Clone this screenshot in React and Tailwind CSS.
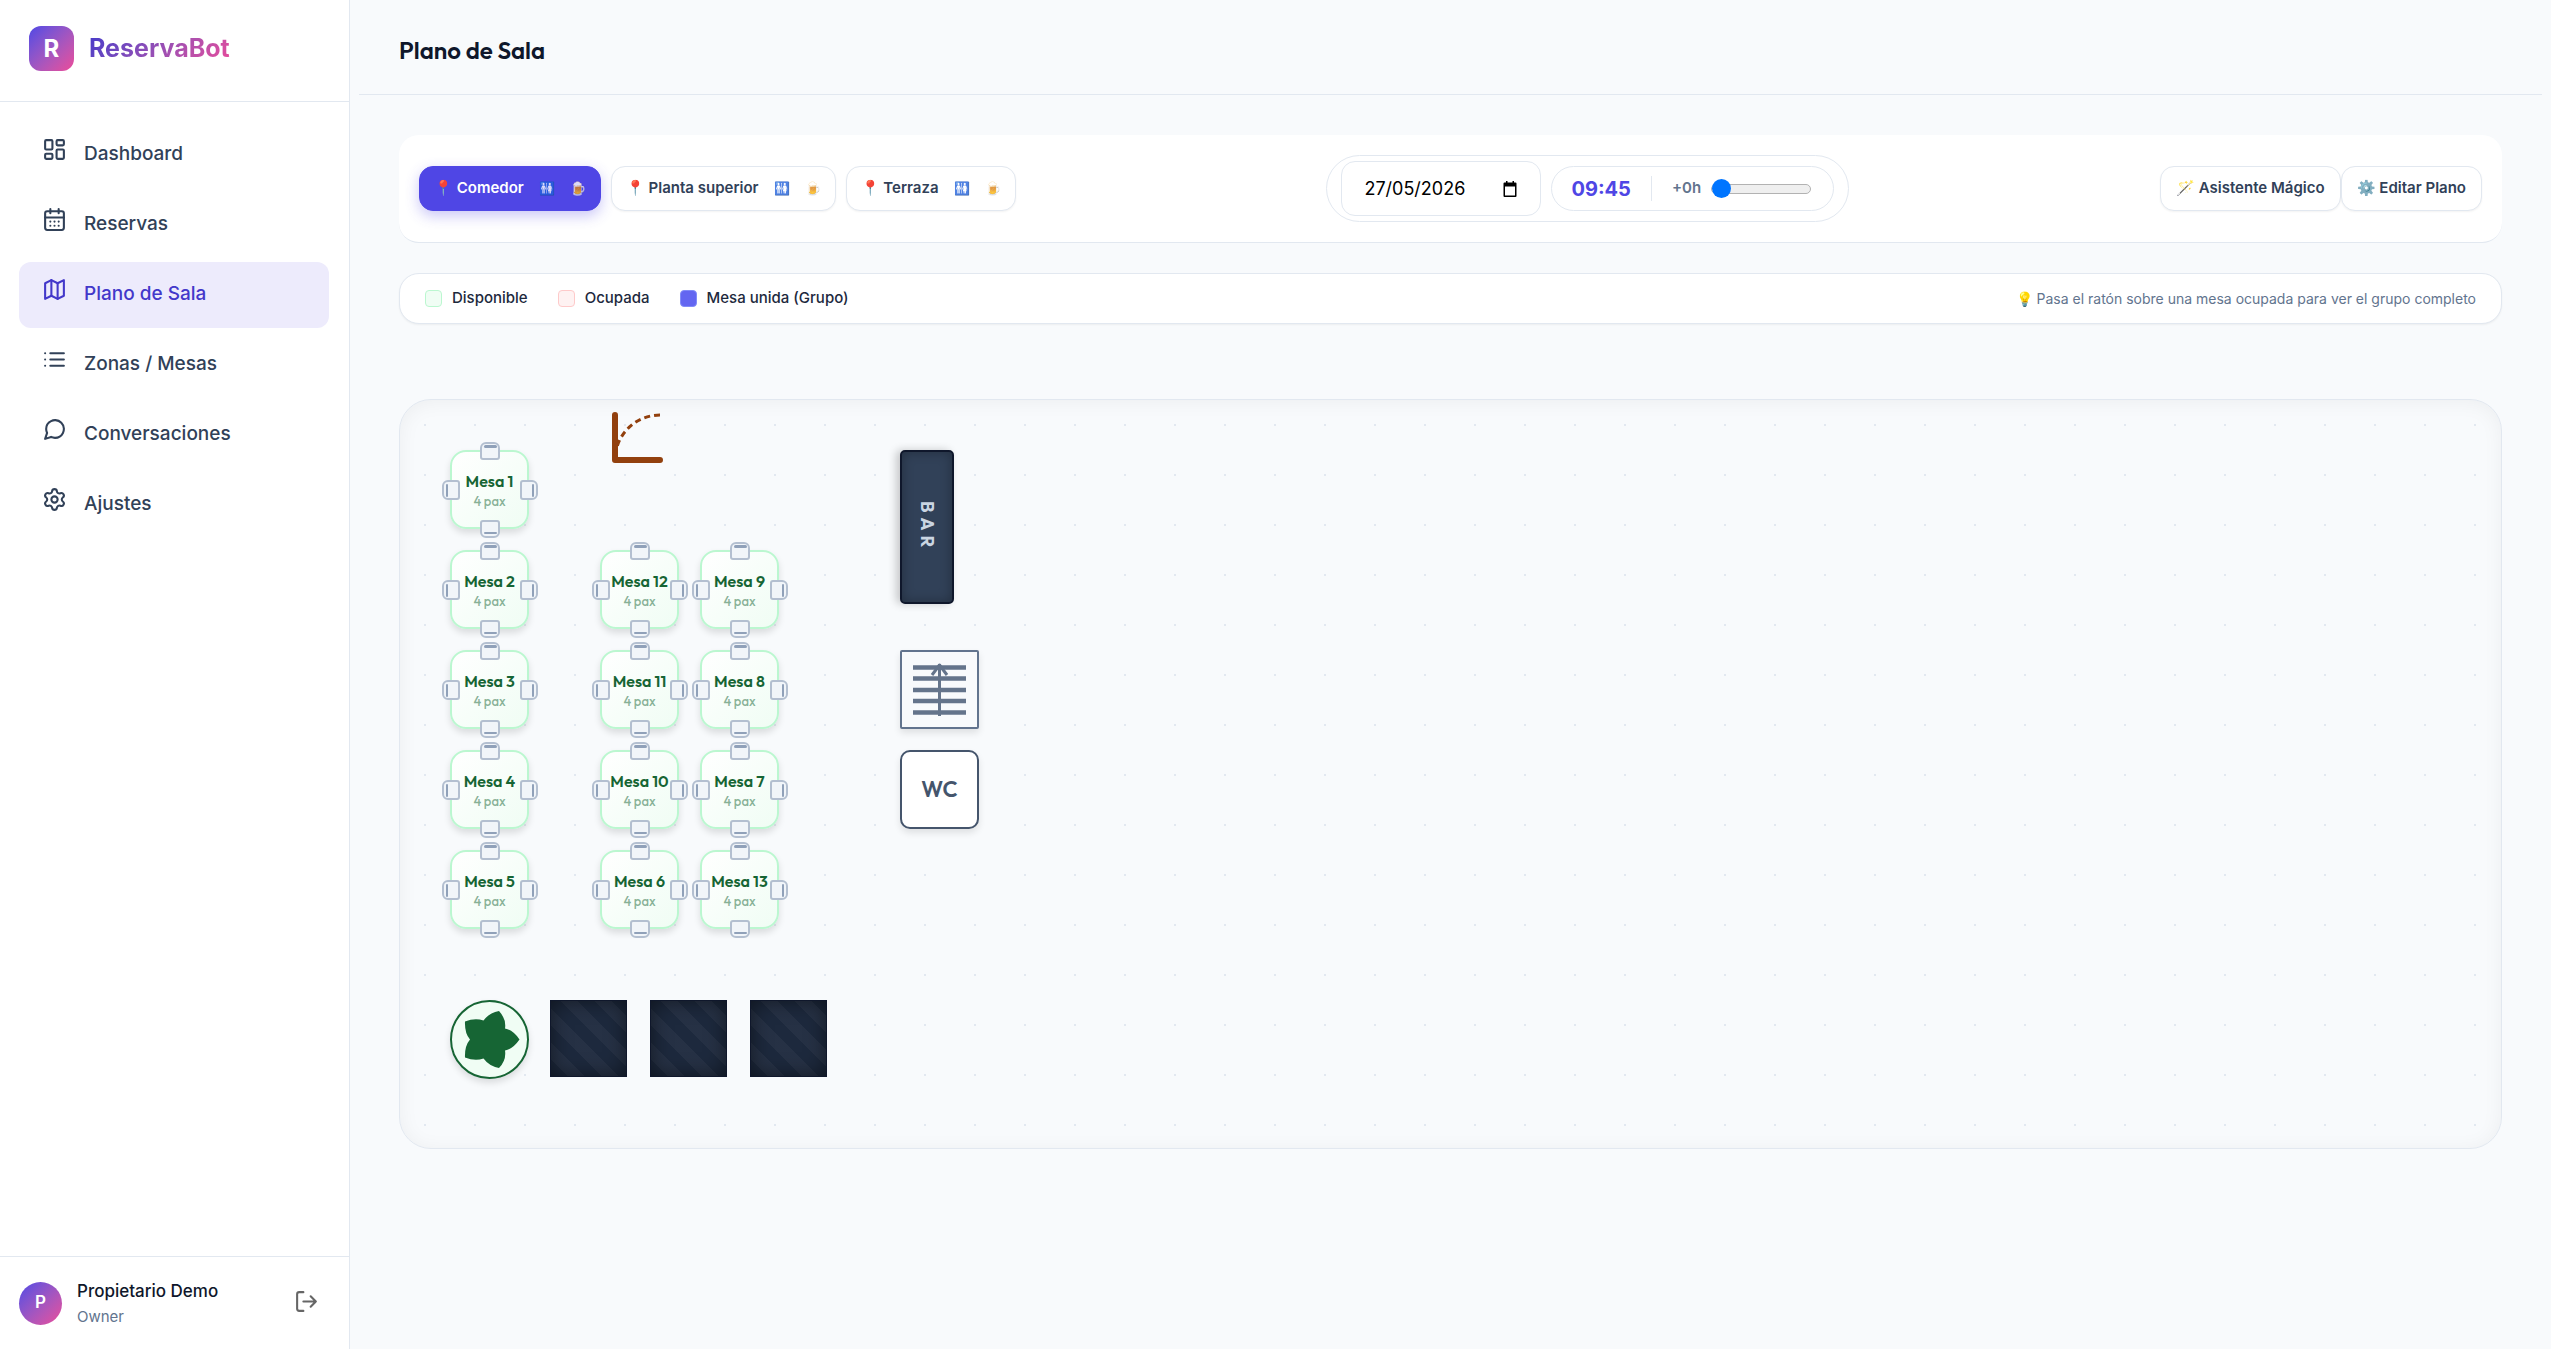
import { useState } from 'react';
import { CalendarDays, LayoutDashboard, Settings } from 'lucide-react';

function MapIcon() {
  return (
    <svg width="25" height="25" viewBox="0 0 24 24" fill="none" stroke="currentColor" strokeWidth="2" strokeLinecap="round" strokeLinejoin="round">
      <polygon points="3 6 9 3 15 6 21 3 21 18 15 21 9 18 3 21" />
      <path d="M9 3v15M15 6v15" />
    </svg>
  );
}

function ListIcon() {
  return (
    <svg width="25" height="25" viewBox="0 0 24 24" fill="none" stroke="currentColor" strokeWidth="2" strokeLinecap="round" strokeLinejoin="round">
      <path d="M8 6h13M8 12h13M8 18h13M3 6h.01M3 12h.01M3 18h.01" />
    </svg>
  );
}

function ChatIcon() {
  return (
    <svg width="25" height="25" viewBox="0 0 24 24" fill="none" stroke="currentColor" strokeWidth="2" strokeLinecap="round" strokeLinejoin="round">
      <path d="M21 11.5a8.38 8.38 0 0 1-.9 3.8 8.5 8.5 0 0 1-7.6 4.7 8.38 8.38 0 0 1-3.8-.9L3 21l1.9-5.7a8.38 8.38 0 0 1-.9-3.8 8.5 8.5 0 0 1 4.7-7.6 8.38 8.38 0 0 1 3.8-.9h.5a8.48 8.48 0 0 1 8 8v.5z" />
    </svg>
  );
}

const navItems = [
  { label: 'Dashboard', icon: <LayoutDashboard size={25} /> },
  { label: 'Reservas', icon: <CalendarDays size={25} /> },
  { label: 'Plano de Sala', icon: <MapIcon />, active: true },
  { label: 'Zonas / Mesas', icon: <ListIcon /> },
  { label: 'Conversaciones', icon: <ChatIcon /> },
  { label: 'Ajustes', icon: <Settings size={25} /> },
];

const zones = ['Comedor', 'Planta superior', 'Terraza'];

const legend = [
  { label: 'Disponible', swatch: 'bg-green-50 border-[#bbf7d0]' },
  { label: 'Ocupada', swatch: 'bg-red-50 border-[#fecaca]' },
  { label: 'Mesa unida (Grupo)', swatch: 'bg-[#6366f1] border-[#818cf8]' },
];

const tables = [
  { name: 'Mesa 1', x: 50, y: 50 },
  { name: 'Mesa 2', x: 50, y: 150 },
  { name: 'Mesa 3', x: 50, y: 250 },
  { name: 'Mesa 4', x: 50, y: 350 },
  { name: 'Mesa 5', x: 50, y: 450 },
  { name: 'Mesa 12', x: 200, y: 150 },
  { name: 'Mesa 11', x: 200, y: 250 },
  { name: 'Mesa 10', x: 200, y: 350 },
  { name: 'Mesa 6', x: 200, y: 450 },
  { name: 'Mesa 9', x: 300, y: 150 },
  { name: 'Mesa 8', x: 300, y: 250 },
  { name: 'Mesa 7', x: 300, y: 350 },
  { name: 'Mesa 13', x: 300, y: 450 },
];

const walls = [150, 250, 350];

function Sidebar() {
  return (
    <aside className="w-[350px] shrink-0 bg-white border-r border-slate-200 flex flex-col">
      <div className="flex items-center gap-[15px] px-[29px] pt-[26px] pb-[30px] border-b border-slate-200">
        <div className="size-[45px] rounded-xl bg-linear-135 from-[#4f46e5] to-[#ec4899] text-white text-2xl font-bold flex items-center justify-center">
          R
        </div>
        <span className="text-[25px] font-bold bg-linear-135 from-[#4338ca] to-[#ec4899] bg-clip-text text-transparent">
          ReservaBot
        </span>
      </div>
      <nav className="flex-1 pl-[19px] pr-5 pt-5 flex flex-col gap-1">
        {navItems.map((item) => (
          <a
            key={item.label}
            href="#"
            className={`flex items-start gap-[17px] px-[23px] pt-[15px] pb-[17px] rounded-xl text-[19px] leading-[34px] font-medium ${
              item.active ? 'bg-[#edebfc] text-[#4338ca]' : 'text-slate-700'
            }`}
          >
            {item.icon}
            {item.label}
          </a>
        ))}
      </nav>
      <div className="flex items-center gap-[15px] px-[19px] py-5 border-t border-slate-200">
        <div className="size-[43px] rounded-full bg-linear-135 from-[#4f46e5] to-[#ec4899] text-white text-[17px] font-semibold flex items-center justify-center">
          P
        </div>
        <div className="flex-1">
          <div className="text-[17px] leading-7 font-medium text-slate-900">Propietario Demo</div>
          <div className="text-[15px] leading-6 text-slate-500">Owner</div>
        </div>
        <button aria-label="Cerrar sesión" className="px-[11px] pt-2 pb-3 text-[#666666]">
          <svg width="25" height="25" viewBox="0 0 24 24" fill="none" stroke="currentColor" strokeWidth="2" strokeLinecap="round" strokeLinejoin="round">
            <path d="M9 21H5a2 2 0 0 1-2-2V5a2 2 0 0 1 2-2h4M16 17l5-5-5-5M21 12H9" />
          </svg>
        </button>
      </div>
    </aside>
  );
}

function Toolbar({ zone, setZone }) {
  const [date, setDate] = useState('27/05/2026');
  const [offset, setOffset] = useState(0);

  return (
    <section className="bg-white rounded-[20px] border-b border-slate-200 px-5 py-5 flex items-center justify-between">
      <div className="flex gap-[10px]">
        {zones.map((z) => (
          <button
            key={z}
            onClick={() => setZone(z)}
            className={`h-[45px] px-[14px] rounded-[14px] border text-[15px] font-semibold flex items-center whitespace-pre ${
              z === zone
                ? 'bg-[#4f46e5] border-[#4f46e5] text-white shadow-[0_5px_14px_rgba(79,70,229,0.3)]'
                : 'bg-white border-slate-200 text-slate-700 shadow-xs'
            }`}
          >
            📍 {z}
            <span className="ml-[15px] text-[13px] opacity-80">🚻</span>
            <span className="ml-[15px] text-[13px] opacity-80">🍺</span>
          </button>
        ))}
      </div>

      <div className="h-[67px] px-[14px] rounded-full border border-slate-200 flex items-center gap-[10px]">
        <div className="h-[55px] w-[200px] px-[22px] rounded-[14px] border border-slate-200 flex items-center">
          <input
            aria-label="Fecha"
            value={date}
            onChange={(e) => setDate(e.target.value)}
            className="min-w-0 flex-1 text-lg text-black outline-none"
          />
          <svg width="16" height="18" viewBox="0 0 16 18" fill="#000">
            <path d="M4 1h1.500v1.500h5V1H12v1.500h1.500a1 1 0 0 1 1 1V16a1 1 0 0 1-1 1h-11a1 1 0 0 1-1-1V3.500a1 1 0 0 1 1-1H4zM3 6.500v9h10v-9z" />
          </svg>
        </div>
        <div className="h-[45px] pl-[19px] pr-[22px] rounded-full border border-slate-200 flex items-center">
          <span className="text-xl font-bold text-[#4f46e5]">09:45</span>
          <label className="ml-5 h-[25px] pl-5 border-l border-slate-200 flex items-center text-[15px] font-semibold text-slate-500">
            +{offset}h
            <input
              type="range"
              min="0"
              max="12"
              value={offset}
              onChange={(e) => setOffset(e.target.value)}
              className="ml-[10px] w-[100px] h-[10px] appearance-none rounded-full bg-[#efefef] border border-[#b2b2b2] [&::-webkit-slider-thumb]:appearance-none [&::-webkit-slider-thumb]:size-[19px] [&::-webkit-slider-thumb]:rounded-full [&::-webkit-slider-thumb]:bg-[#0075ff]"
            />
          </label>
        </div>
      </div>

      <div className="flex">
        <button className="h-[45px] px-[15px] rounded-[14px] border border-slate-200 bg-white text-[15px] font-semibold text-slate-700 shadow-xs">
          🪄 Asistente Mágico
        </button>
        <button className="h-[45px] px-[15px] rounded-[14px] border border-slate-200 bg-white text-[15px] font-semibold text-slate-700 shadow-xs">
          ⚙️ Editar Plano
        </button>
      </div>
    </section>
  );
}

function Legend() {
  return (
    <section className="bg-white rounded-[20px] border border-slate-200 shadow-xs px-[25px] h-[51px] flex items-center gap-[30px]">
      {legend.map((l) => (
        <div key={l.label} className="flex items-center gap-[10px] text-[15px] font-medium text-slate-800">
          <span className={`size-[17px] rounded-sm border ${l.swatch}`} />
          {l.label}
        </div>
      ))}
      <p className="ml-auto text-sm text-slate-500">💡 Pasa el ratón sobre una mesa ocupada para ver el grupo completo</p>
    </section>
  );
}

// one chair on each side of the table
function Chairs() {
  const base = 'absolute flex bg-slate-100 border-2 border-[#b3bfd0]';
  return (
    <>
      <span className={`${base} -top-[10px] left-7 w-5 h-[18px] rounded-t-[6px] rounded-b-[3px] justify-center items-start pt-px`}>
        <i className="w-[13px] h-[3px] rounded-full bg-slate-400" />
      </span>
      <span className={`${base} -bottom-[11px] left-7 w-5 h-[18px] rounded-b-[6px] rounded-t-[3px] justify-center items-end pb-[2px]`}>
        <i className="w-[13px] h-[2px] rounded-full bg-slate-400" />
      </span>
      <span className={`${base} -left-[10px] top-7 w-[18px] h-5 rounded-l-[6px] rounded-r-[3px] items-center justify-start pl-[2px]`}>
        <i className="w-[2px] h-[13px] rounded-full bg-slate-400" />
      </span>
      <span className={`${base} -right-[11px] top-7 w-[18px] h-5 rounded-r-[6px] rounded-l-[3px] items-center justify-end pr-[2px]`}>
        <i className="w-[2px] h-[13px] rounded-full bg-slate-400" />
      </span>
    </>
  );
}

function FloorTable({ table }) {
  return (
    <div
      style={{ left: table.x, top: table.y }}
      className="absolute size-[79px] pt-[3px] rounded-[16px] border-2 border-[#bbf7d0] bg-linear-135 from-white to-[#f0fdf4] shadow-[0_4px_7px_rgba(0,0,0,0.12)] flex flex-col items-center justify-center font-['Outfit',Lato,sans-serif] whitespace-nowrap"
    >
      <Chairs />
      <span className="text-base leading-5 font-semibold text-[#166534]">{table.name}</span>
      <span className="text-[13px] leading-5 font-medium text-[#166534]/50">4 pax</span>
    </div>
  );
}

function FloorPlan() {
  return (
    <section className="relative h-[750px] overflow-hidden rounded-[32px] border border-slate-200 bg-slate-50 bg-[radial-gradient(circle,#e2e8f0_1px,transparent_1px)] bg-size-[50px_50px] shadow-[inset_0_2px_20px_rgba(0,0,0,0.05)]">
      {tables.map((t) => (
        <FloorTable key={t.name} table={t} />
      ))}

      {/* puerta */}
      <svg className="absolute left-[200px] top-0" width="70" height="70" viewBox="0 0 70 70" fill="none" stroke="#92400e">
        <path d="M15 15v45h45" strokeWidth="6" strokeLinecap="round" strokeLinejoin="round" />
        <path d="M60 15a45 45 0 0 0-45 45" strokeWidth="3" strokeDasharray="6 4" />
      </svg>

      {/* barra */}
      <div className="absolute left-[500px] top-[50px] w-[54px] h-[154px] rounded-[5px] border-2 border-slate-900 bg-slate-700 shadow-[inset_0_0_12px_rgba(0,0,0,0.3),-4px_0_8px_rgba(0,0,0,0.2)] flex items-center justify-center">
        <span className="[writing-mode:vertical-rl] text-lg font-bold tracking-[5px] text-slate-300 font-['Outfit',Lato,sans-serif]">BAR</span>
      </div>

      {/* escaleras */}
      <div className="absolute left-[500px] top-[250px] size-[79px] rounded-[2px] border-2 border-slate-500 bg-slate-50 shadow-[0_4px_7px_rgba(0,0,0,0.1)]">
        <svg width="75" height="75" viewBox="0 0 75 75" fill="none" stroke="#64748b">
          <path d="M11 15.500h53M11 26.500h53M11 38h53M11 49h53M11 60.500h53" strokeWidth="4.500" />
          <path d="M37.500 64V12M30 23l7.500-10 7.500 10" strokeWidth="3" strokeLinejoin="round" />
        </svg>
      </div>

      <div className="absolute left-[500px] top-[350px] size-[79px] rounded-[10px] border-2 border-slate-600 bg-white shadow-[0_4px_7px_rgba(0,0,0,0.1)] flex items-center justify-center text-[22px] font-semibold text-slate-600 font-['Outfit',Lato,sans-serif]">
        WC
      </div>

      {/* planta */}
      <div className="absolute left-[50px] top-[600px] size-[79px] rounded-full border-2 border-[#166534] bg-[#f0fdf4] shadow-[0_4px_7px_rgba(0,0,0,0.12)]">
        <svg width="75" height="75" viewBox="0 0 75 75" fill="#166534">
          <path d="M67.500 37.500Q61 28 53 26.500Q54.500 17 47 9Q37 11 31.500 18.500Q23 15.500 13 19.500Q12.500 31 18 37.500Q12.500 44 13 55.500Q23 59.500 31.500 56.500Q37 64 47 66Q54.500 58 53 48.500Q61 47 67.500 37.500z" />
        </svg>
      </div>

      {walls.map((x) => (
        <div
          key={x}
          style={{ left: x }}
          className="absolute top-[600px] size-[77px] border border-slate-900 bg-slate-800 bg-[repeating-linear-gradient(45deg,transparent_0_12px,rgba(255,255,255,0.04)_12px_24px)] shadow-[inset_0_0_20px_rgba(0,0,0,0.5)]"
        />
      ))}
    </section>
  );
}

export default function App() {
  const [zone, setZone] = useState('Comedor');

  return (
    <div className="min-h-screen flex bg-slate-50 font-['Inter',sans-serif] text-slate-900">
      <Sidebar />
      <main className="flex-1 min-w-0 px-[9px]">
        <header className="h-[95px] pl-10 pt-[30px] border-b border-slate-200">
          <h1 className="text-2xl leading-10 font-semibold font-['Outfit',Lato,sans-serif]">Plano de Sala</h1>
        </header>
        <div className="px-10 pt-10">
          <Toolbar zone={zone} setZone={setZone} />
          <div className="mt-[30px]">
            <Legend />
          </div>
          <div className="mt-[75px]">
            <FloorPlan />
          </div>
        </div>
      </main>
    </div>
  );
}
